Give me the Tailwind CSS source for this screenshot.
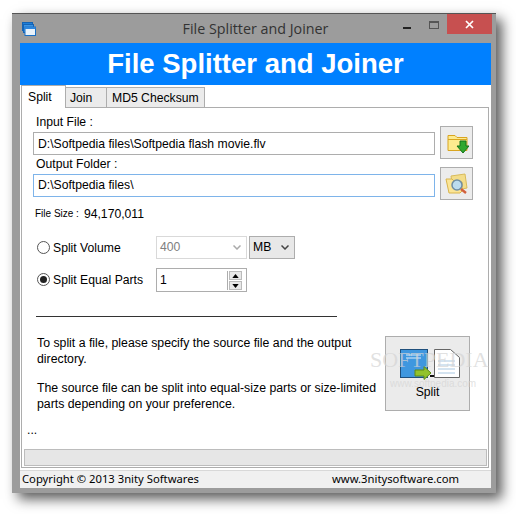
<!DOCTYPE html>
<html lang="en">
<head>
  <meta charset="UTF-8" />
  <title>File Splitter and Joiner</title>
  <script src="https://cdn.jsdelivr.net/npm/@tailwindcss/browser@4"></script>
</head>
<body class="bg-white w-[516px] h-[514px] overflow-hidden font-['Liberation_Sans',sans-serif] text-[12.2px] text-black">
  <div class="ml-[12px] mt-[13px] w-[484px] h-[480px] bg-[#9c9c9c] border-t border-t-[#555] shadow-[6px_6px_12px_rgba(0,0,0,0.65)] flex flex-col relative">
    <!-- title bar -->
    <div class="h-[29px] flex items-center relative">
      <svg class="ml-[10px] w-[14px] h-[14px]" viewBox="0 0 14 14">
        <rect x="0.5" y="0.5" width="10" height="8" fill="#1f7fd8" stroke="#1463b5"/>
        <rect x="1.5" y="2.5" width="10" height="8" fill="#3f96e4" stroke="#1463b5"/>
        <rect x="3" y="5" width="10.5" height="8.5" fill="#e8f2fb" stroke="#1a6fc4"/>
        <rect x="3" y="5" width="10.5" height="2" fill="#2f86dc"/>
      </svg>
      <span class="absolute left-[3px] right-0 text-center font-['Open_Sans',sans-serif] text-[14.3px] text-[#333]">File Splitter and Joiner</span>
      <div class="absolute left-[391px] top-[13px] w-[8px] h-[2px] bg-[#222]"></div>
      <div class="absolute left-[417px] top-[7px] w-[10px] h-[8px] border border-[#555] border-t-2"></div>
      <div class="absolute left-[435px] top-0 w-[45px] h-[20px] bg-[#c75050] flex items-center justify-center">
        <svg class="w-[9px] h-[9px]" viewBox="0 0 9 9"><path d="M1 1L8 8M8 1L1 8" stroke="#fff" stroke-width="1.7"/></svg>
      </div>
    </div>
    <!-- client area -->
    <div class="ml-[8px] w-[471px] h-[445px] bg-white flex flex-col relative">
      <div class="h-[42px] bg-[#0080ff] flex items-center justify-center font-bold text-[27.5px] text-white">File Splitter and Joiner</div>
      <!-- tabs -->
      <div class="h-[23px] flex items-end pl-[1px] relative z-10">
        <div class="w-[45px] h-[23px] bg-white border border-[#adadad] border-b-0 pl-[6px] pt-[2px]">Split</div>
        <div class="w-[41px] h-[21px] bg-[#ebebeb] border border-[#adadad] border-l-0 pl-[4px] pt-[1px]">Join</div>
        <div class="w-[98px] h-[21px] bg-[#ebebeb] border border-[#adadad] border-l-0 pl-[5px] pt-[1px]">MD5 Checksum</div>
      </div>
      <!-- tab panel -->
      <div class="-mt-[1px] ml-[1px] w-[468px] h-[361px] border border-[#adadad] pt-[6px] pl-[11px] flex flex-col relative">
        <div class="h-[17px] leading-[17px] ml-[3px]">Input File :</div>
        <div class="flex items-start -mt-[1px]">
          <div class="w-[402px] h-[23px] mt-[2px] border border-[#adadad] px-[4px] leading-[22px]">D:\Softpedia files\Softpedia flash movie.flv</div>
          <div class="ml-[5px] -mt-[4px] w-[33px] h-[33px] bg-[#ececec] border border-[#adadad] flex items-center justify-center">
            <svg class="w-[22px] h-[22px] ml-[2px]" viewBox="0 0 22 22">
              <path d="M1 3.5h7l2 2h10v13H1z" fill="#fdeb8f" stroke="#d9a520"/>
              <path d="M1 7.5h19" stroke="#d9a520"/>
              <path d="M12 9h6v5h3l-6 7-6-7h3z" fill="#2fa82f" stroke="#15731a" transform="translate(1 0)"/>
            </svg>
          </div>
        </div>
        <div class="h-[17px] leading-[17px] ml-[3px] -mt-[3px]">Output Folder :</div>
        <div class="flex items-start mt-[1px]">
          <div class="w-[402px] h-[23px] border border-[#7eb4ea] px-[4px] leading-[21px]">D:\Softpedia files\</div>
          <div class="ml-[5px] -mt-[7px] w-[33px] h-[33px] bg-[#ececec] border border-[#adadad] flex items-center justify-center">
            <svg class="w-[26px] h-[26px]" viewBox="0 0 26 26">
              <path d="M7 5l14-2 2 14-14 3z" fill="#f3dd8a" stroke="#d8bb5c"/>
              <path d="M2 8h6l2 2 8 1v9l-2 2H5z" fill="#fbe596" stroke="#d8b44c"/>
              <circle cx="13" cy="14" r="5" fill="#bcdcee" stroke="#6f8da3" stroke-width="1.5"/>
              <path d="M17 18l5 4" stroke="#d2603c" stroke-width="2.5"/>
            </svg>
          </div>
        </div>
        <div class="ml-[2px] mt-[6px] h-[16px] leading-[16px] flex">
          <span class="text-[10px]">File Size :</span><span class="ml-[5px]">94,170,011</span>
        </div>
        <!-- options -->
        <div class="flex items-start mt-[14px] h-[23px]">
          <div class="w-[13px] h-[13px] mt-[5px] ml-[4px] rounded-full border border-[#555] bg-white"></div>
          <span class="ml-[3px] w-[103px] mt-[3px]">Split Volume</span>
          <div class="w-[91px] h-[23px] border border-[#d9d9d9] text-[#808080] pl-[3px] leading-[21px] flex justify-between items-center pr-[5px]">
            400
            <svg class="w-[8px] h-[5px]" viewBox="0 0 8 5"><path d="M0.5 0.5L4 4l3.5-3.5" fill="none" stroke="#aaa" stroke-width="1.5"/></svg>
          </div>
          <div class="ml-[2px] w-[46px] h-[23px] border border-[#adadad] bg-[#e8e8e8] pl-[3px] leading-[21px] flex justify-between items-center pr-[5px]">
            MB
            <svg class="w-[8px] h-[5px]" viewBox="0 0 8 5"><path d="M0.5 0.5L4 4l3.5-3.5" fill="none" stroke="#444" stroke-width="1.5"/></svg>
          </div>
        </div>
        <div class="flex items-start mt-[9px] h-[24px]">
          <div class="w-[13px] h-[13px] mt-[5px] ml-[4px] rounded-full border border-[#555] bg-white flex items-center justify-center">
            <div class="w-[7px] h-[7px] rounded-full bg-[#222]"></div>
          </div>
          <span class="ml-[3px] w-[103px] mt-[3px]">Split Equal Parts</span>
          <div class="w-[91px] h-[24px] border border-[#adadad] pl-[3px] leading-[20px] flex justify-between pr-[1px] pt-[1px]">
            1
            <div class="w-[15px] h-[19px] mt-[1px] mr-[3px] border-l border-[#adadad] pl-[1px] flex flex-col gap-[1px]">
              <div class="h-[9px] bg-[#e8e8e8] border border-[#bbb] flex items-center justify-center"><svg class="w-[7px] h-[4px]" viewBox="0 0 8 5"><path d="M4 0L8 5H0z" fill="#000"/></svg></div>
              <div class="h-[9px] bg-[#e8e8e8] border border-[#bbb] flex items-center justify-center"><svg class="w-[7px] h-[4px]" viewBox="0 0 8 5"><path d="M4 5L8 0H0z" fill="#000"/></svg></div>
            </div>
          </div>
        </div>
        <div class="ml-[3px] mt-[24px] w-[301px] h-[1px] bg-[#333]"></div>
        <!-- help text + split button -->
        <div class="flex items-start mt-[19px] ml-[4px]">
          <div class="w-[348px] leading-[16px] mt-[-1px] text-[12.3px]">
            <p>To split a file, please specify the source file and the output directory.</p>
            <p class="mt-[13px]">The source file can be split into equal-size parts or size-limited parts depending on your preference.</p>
          </div>
          <div class="w-[85px] h-[75px] bg-[#ebebeb] border border-[#adadad] flex flex-col items-center pt-[12px]">
            <svg class="w-[60px] h-[31px] ml-[5px]" viewBox="0 0 60 31">
              <rect x="0.5" y="0.5" width="27" height="28" fill="#3f97df" stroke="#1f4f7c"/>
              <path d="M6 6h15M6 9h15" stroke="#dcefff"/>
              <path d="M30 27h5" stroke="#111" stroke-width="2"/>
              <path d="M34.500 0.500h16l9 8v20h-25z" fill="#fff" stroke="#666"/>
              <path d="M38 12h17M38 16h17M38 20h17M38 24h17" stroke="#a9c8e2"/>
              <path d="M15 21h9v-3.500l7 6.500-7 6.500v-3.500h-9z" fill="#92c22c" stroke="#5f8a16"/>
            </svg>
            <span class="mt-[3px]">Split</span>
          </div>
        </div>
        <div class="ml-[-6px] mt-[10px] h-[16px] leading-[16px]">...</div>
        <!-- progress -->
        <div class="ml-[-9px] mt-[11px] w-[463px] h-[17px] bg-[#e6e6e6] border border-[#bcbcbc]"></div>
      </div>
      <!-- status bar -->
      <div class="mt-[2px] h-[18px] bg-[#f0f0f0] border-t border-[#d8d8d8] flex items-center justify-between pl-[2px] pr-[32px] font-['Noto_Sans',sans-serif] text-[11.25px]">
        <span>Copyright © 2013 3nity Softwares</span>
        <span>www.3nitysoftware.com</span>
      </div>
      <!-- watermark -->
      <div class="absolute left-[350px] top-[305px] font-['Liberation_Serif',serif] text-[22px] leading-[24px] text-[#d4d4d4]/70 whitespace-nowrap">SOFTPEDIA</div>
      <div class="absolute left-[370px] top-[336px] text-[10px] leading-[10px] text-[#d4d4d4]/70 whitespace-nowrap">www.softpedia.com</div>
    </div>
  </div>
</body>
</html>
